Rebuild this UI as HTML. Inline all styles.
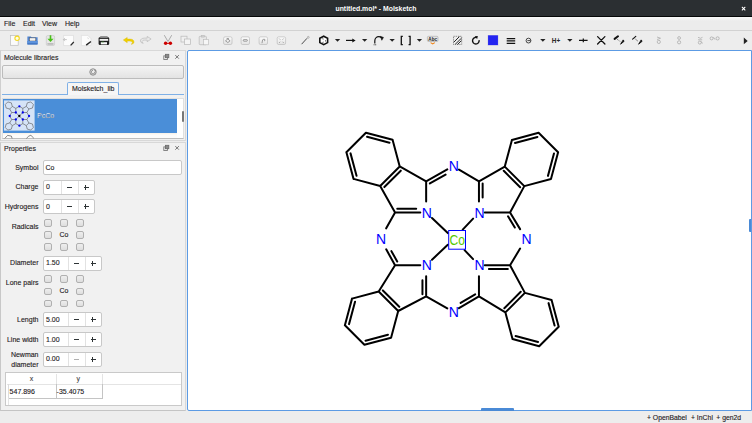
<!DOCTYPE html>
<html><head><meta charset="utf-8">
<style>
*{margin:0;padding:0;box-sizing:border-box}
html,body{width:752px;height:423px;overflow:hidden;background:#ededed;font-family:"Liberation Sans",sans-serif;color:#2e3436}
.a{position:absolute}
#title{left:0;top:0;width:752px;height:17px;background:#2b2f32;border-bottom:1px solid #060808}
#title .t{left:0;width:752px;top:3.8px;text-align:center;color:#fff;font-weight:bold;font-size:6.85px;line-height:10px}
#menu{left:0;top:17px;width:752px;height:14px;background:linear-gradient(#f9f9f9,#ececec 30%);border-bottom:1px solid #d2d2d2}
#menu span{position:absolute;top:2px;font-size:7px;line-height:10px;color:#1e2022;-webkit-text-stroke:0.12px #1e2022}
#tool{left:0;top:31px;width:752px;height:19px;background:#ededed}
.txt{font-size:7px;line-height:10px;color:#1e2022;white-space:nowrap;-webkit-text-stroke:0.12px #1e2022}
.frame{border:1px solid #d0d0d0;background:#efefef}
.spin{background:#fff;border:1px solid #c8c8c8;border-radius:2px}
.cb{width:7.6px;height:7.6px;border:1px solid #b0b0b0;border-radius:2px;background:linear-gradient(#eeeeee,#dedede)}
</style></head><body>
<div id="title" class="a"><div class="a t">untitled.mol* - Molsketch</div>
<svg class="a" style="left:739px;top:4px" width="9" height="9" viewBox="0 0 9 9"><path d="M2.9 2.9L6.3 6.3M6.3 2.9L2.9 6.3" stroke="#000" stroke-width="2.2" opacity="0.45"/><path d="M2.9 2.9L6.3 6.3M6.3 2.9L2.9 6.3" stroke="#fff" stroke-width="1.2"/></svg></div>
<div id="menu" class="a"><span style="left:4px">File</span><span style="left:23px">Edit</span><span style="left:42px">View</span><span style="left:65px">Help</span></div>
<div id="tool" class="a"></div>
<!--TB--><svg class="a" style="left:0;top:0" width="752" height="50" viewBox="0 0 752 50">
<defs>
<linearGradient id="zg" x1="0" y1="0" x2="0" y2="1"><stop offset="0" stop-color="#fdfdfd"/><stop offset="1" stop-color="#e2e2e2"/></linearGradient>
</defs>
<!-- new -->
<rect x="10.4" y="35.5" width="7.8" height="9.8" fill="#fbfbfb" stroke="#bcbcbc" stroke-width="0.7"/>
<circle cx="17.1" cy="38.3" r="2.2" fill="#fffde8" stroke="#f4d820" stroke-width="1.1"/>
<!-- open -->
<path d="M27.4 36.4h3.4l0.9 0.9h5.9v6.4h-10.2z" fill="#4f83cf"/>
<rect x="29.4" y="37.9" width="6.4" height="3.1" fill="#f4f4f4" stroke="#3a3a3a" stroke-width="0.45"/>
<path d="M27 40.9h10.9l-0.5 3.5h-9.9z" fill="#5c92dc"/>
<rect x="27.3" y="43.5" width="10.3" height="0.9" fill="#2f61b0"/>
<!-- save -->
<rect x="46.3" y="35.6" width="8.3" height="9.9" rx="1.3" fill="#e6e6e6" stroke="#c2c2c2" stroke-width="0.6"/>
<rect x="47.4" y="43" width="6.1" height="1.8" fill="#bdbdbd"/>
<path d="M49.7 35.2h1.6v3.6h2.3l-3.1 3.3l-3.1-3.3h2.3z" fill="#48c018"/>
<!-- import page -->
<path d="M63.6 35.4h9.9v7.6l-2.6 2.6h-7.3z" fill="#fcfcfc" stroke="#d6d6d6" stroke-width="0.6"/>
<path d="M63.6 39.6h3.2M64.8 38.1l-1.4 1.5l1.4 1.5" stroke="#b8b8b8" stroke-width="0.8" fill="none"/>
<path d="M70.6 45.4l3.2-3.4" stroke="#2a2a2a" stroke-width="1.3"/>
<!-- export page w pen -->
<path d="M81.4 35.4h6.4l3.2 3.3v6.9h-9.6z" fill="#fcfcfc" stroke="#dadada" stroke-width="0.6"/>
<path d="M87.6 37.5l1 1.6" stroke="#ccc" stroke-width="0.7"/>
<path d="M86.2 45.1l4.7-3.6" stroke="#262626" stroke-width="1.5"/>
<!-- print -->
<rect x="98.6" y="37.2" width="10.6" height="7.9" rx="1.4" fill="#1f1f1f"/>
<rect x="100.2" y="36.1" width="7.4" height="1.8" fill="#8a8a8a"/>
<rect x="99.6" y="38.9" width="8.6" height="1.9" fill="#f2f2f2"/>
<rect x="100.8" y="42.2" width="6.2" height="2.2" fill="#fafafa"/>
<rect x="101.6" y="41.7" width="2.2" height="0.6" fill="#55b040"/>
<!-- undo -->
<path d="M127.2 37.4l-3.9 2.6l3.9 2.7v-1.6h2.6c1.6 0 2.6 0.9 2.6 1.6c0 0.7-0.5 1.2-1.3 1.5c2.2-0.2 2.9-1.3 2.9-2.3c0-1.6-1.6-2.8-4.1-2.8h-2.7z" fill="#f0d000" stroke="#d8b800" stroke-width="0.4"/>
<!-- redo (disabled) -->
<path d="M147.2 36.4l3.9 2.6l-3.9 2.7v-1.6h-2.6c-1.6 0-2.6 0.9-2.6 1.6c0 0.7 0.5 1.2 1.3 1.5c-2.2-0.2-2.9-1.3-2.9-2.3c0-1.6 1.6-2.8 4.1-2.8h2.7z" fill="#e8e8e8" stroke="#b4b4b4" stroke-width="0.6"/>
<!-- cut -->
<path d="M164.3 35.2l3.6 6.2M171.7 35.2l-3.6 6.2" stroke="#aaa" stroke-width="1" fill="none"/>
<circle cx="165.6" cy="43.3" r="1.7" fill="#cc0000"/><circle cx="170.4" cy="43.3" r="1.7" fill="#cc0000"/>
<path d="M165.6 43.3h4.8" stroke="#cc0000" stroke-width="1"/>
<!-- copy (disabled) -->
<rect x="181" y="36.2" width="6" height="5.8" fill="#f0f0f0" stroke="#b8b8b8" stroke-width="0.7"/>
<rect x="184.5" y="39" width="6" height="5.6" fill="#f4f4f4" stroke="#b8b8b8" stroke-width="0.7"/>
<!-- paste (disabled) -->
<rect x="199.2" y="36.3" width="7.2" height="8.4" rx="0.8" fill="#e8e8e8" stroke="#b8b8b8" stroke-width="0.7"/>
<rect x="201.3" y="35.3" width="3" height="1.8" fill="#d0d0d0" stroke="#b8b8b8" stroke-width="0.5"/>
<rect x="203.6" y="39.4" width="5" height="5.4" fill="#f6f6f6" stroke="#b8b8b8" stroke-width="0.6"/>
<!-- zoom buttons -->
<g stroke="#b4b4b4" stroke-width="0.6" fill="url(#zg)">
<rect x="223.6" y="36.9" width="8.4" height="7.6" rx="1.4"/>
<rect x="241.1" y="36.9" width="8.4" height="7.6" rx="1.4"/>
<rect x="259.1" y="36.9" width="8.4" height="7.6" rx="1.4"/>
<rect x="277.2" y="36.9" width="8.4" height="7.6" rx="1.4"/>
</g>
<g stroke="#666" stroke-width="0.6" fill="none">
<path d="M225.5 40.8l2.3-1.8l2.3 1.8l-2.3 1.8z M226.6 38.6h2.4"/>
<rect x="243.3" y="39.6" width="4" height="1.6" rx="0.5"/>
<path d="M262 43.2l0.6-3.4l1.6-0.8l1 1.2l-1.2 0.8"/>
<path d="M279.2 38.6l1 1M283.6 38.6l-1 1M279.2 42.8l1-1M283.6 42.8l-1-1"/>
</g>
<!-- pen -->
<path d="M301.6 44.2l5.4-5.9" stroke="#4a4a4a" stroke-width="1"/>
<circle cx="308.3" cy="37.3" r="0.9" fill="none" stroke="#999" stroke-width="0.7"/>
<!-- hexagon -->
<polygon points="323.7,36.2 327.6,38.3 327.6,42.6 323.7,44.7 319.8,42.6 319.8,38.3" fill="#fff" stroke="#111" stroke-width="1.6"/>
<path d="M322.2 38.7l1.5 0.4M325.5 40.2v1.3M322.3 42.5l1.4-0.4" stroke="#222" stroke-width="0.7"/>
<!-- dropdowns -->
<g fill="#222">
<path d="M334.9 39h5.3l-2.65 2.8z"/>
<path d="M362 39h5.3l-2.65 2.8z"/>
<path d="M389.5 39h5.3l-2.65 2.8z"/>
<path d="M416.8 39h5.3l-2.65 2.8z"/>
<path d="M540.2 39h5.3l-2.65 2.8z"/>
<path d="M567.2 39h5.3l-2.65 2.8z"/>
<path d="M743.8 37.6l3.9 3.3l-3.9 3.3z"/>
</g>
<!-- arrow -->
<path d="M346 40.4h7" stroke="#111" stroke-width="1.2"/>
<path d="M352.3 38.4l3.3 2l-3.3 2z" fill="#111"/>
<!-- curved arrow -->
<path d="M374.8 43.6v-2.6c0-2.5 1.8-4.3 4-4.3c1.1 0 1.9 0.3 2.5 0.9" stroke="#111" stroke-width="1.2" fill="none"/>
<path d="M380.4 36.3l3.1 1.1l-1.7 2.9z" fill="#111" stroke="#111" stroke-width="0.5" stroke-linejoin="round"/>
<circle cx="374.1" cy="44.8" r="0.55" fill="#222"/><circle cx="375.7" cy="44.8" r="0.55" fill="#222"/>
<!-- brackets -->
<path d="M402.8 36.4h-1.5v8.3h1.5M408.6 36.4h1.5v8.3h-1.5" stroke="#111" stroke-width="1.3" fill="none"/>
<!-- Abc -->
<rect x="427.4" y="36.3" width="10.6" height="5.2" rx="1" fill="#e4e4e4" stroke="#9a9a9a" stroke-width="0.5"/>
<text x="432.7" y="40.7" font-size="4.6" font-weight="bold" text-anchor="middle" fill="#222" font-family="Liberation Sans">Abc</text>
<path d="M430.6 42.6l2.1 1.3l2.1-1.3" stroke="#f08010" stroke-width="1.1" fill="none"/>
<!-- hatch -->
<rect x="453.5" y="36.3" width="8.2" height="8.2" fill="none" stroke="#555" stroke-width="0.7" stroke-dasharray="1.2 1"/>
<path d="M453.8 42.2l5.6-5.6M455.4 44.2l6-6M457.6 44.4l3.8-3.8" stroke="#111" stroke-width="0.9"/>
<!-- rotate -->
<path d="M476.9 37.6a3.3 3.3 0 1 0 2.2 2.6" stroke="#111" stroke-width="1.4" fill="none"/>
<path d="M474.6 36.2l3.2-0.2l-0.6 3z" fill="#111"/>
<!-- color -->
<rect x="487.8" y="35" width="10.4" height="10.4" fill="#2424f0" stroke="#fffbe0" stroke-width="0.5"/>
<!-- line width -->
<path d="M506.7 38.6h8.5M506.7 40.9h8.5M506.7 43.3h8.5" stroke="#111" stroke-width="1.2"/>
<!-- charge -->
<circle cx="528.5" cy="40.6" r="2.4" fill="none" stroke="#333" stroke-width="0.9"/>
<path d="M527.4 40.6h3.2" stroke="#333" stroke-width="0.9"/>
<!-- H+ -->
<text x="551.8" y="43" font-size="6.4" font-weight="bold" fill="#2a2a2a" font-family="Liberation Sans">H+</text>
<!-- -+- -->
<path d="M579 40.4h8.6M583.3 38.6v3.6" stroke="#111" stroke-width="1.2"/>
<!-- X -->
<path d="M597.6 36.6l7.3 7.4M604.9 36.6l-7.3 7.4" stroke="#111" stroke-width="1.3" stroke-linecap="round"/>
<!-- wedges -->
<path d="M614.6 38.9l3.4-2.6" stroke="#111" stroke-width="2" stroke-linecap="round"/>
<path d="M620.6 44.2l3.5-2.9l-0.9-1.4z" fill="#111" stroke="#111" stroke-width="0.9" stroke-linejoin="round"/>
<path d="M617.3 39.4l3 2.2" stroke="#222" stroke-width="0.7" stroke-dasharray="0.9 0.7"/>
<path d="M632.6 39.2l3.2-2.9" stroke="#111" stroke-width="1.1" stroke-linecap="round"/>
<path d="M638.6 44.2l3.5-2.9l-0.9-1.4z" fill="#111" stroke="#111" stroke-width="0.9" stroke-linejoin="round"/>
<path d="M634.8 38.6l3.4 2.8" stroke="#222" stroke-width="0.7" stroke-dasharray="0.9 0.7"/>
<!-- gray small icons -->
<g stroke="#999" stroke-width="0.6" fill="none">
<path d="M657 37l3.5 1.2M657 39.5l3.5-1.2"/><circle cx="658.8" cy="41.9" r="1.6"/>
<circle cx="679.1" cy="38" r="1.4"/><circle cx="679.1" cy="42.3" r="1.6"/>
<path d="M698 37.3l2.5 1l2-1M698 39.8h4.2"/><circle cx="699.8" cy="42.6" r="1.5"/><path d="M701.4 41.5l1 2"/>
<circle cx="711.6" cy="38.4" r="1.5"/><circle cx="717.6" cy="38.4" r="1.6"/><path d="M713.5 37.2l1.5 2.4"/>
</g>
</svg>
<!--/TB-->

<!-- Left docks -->
<div class="a" style="left:0px;top:50px;width:186px;height:91px;border:1px solid #d8d8d8;border-left-color:#cfcfcf;background:#f1f1f1"></div>
<div class="a txt" style="left:4px;top:52.7px">Molecule libraries</div>
<svg class="a" style="left:162px;top:53px" width="20" height="9" viewBox="0 0 20 9">
 <rect x="1.8" y="2.9" width="3.6" height="3.6" fill="none" stroke="#7a7a7a" stroke-width="0.9"/>
 <rect x="3.4" y="1.3" width="3.4" height="3.4" fill="#8a8a8a" stroke="#6a6a6a" stroke-width="0.8"/>
 <path d="M13.3 2.1L16.9 5.7M16.9 2.1L13.3 5.7" stroke="#6a6a6a" stroke-width="0.9"/>
</svg>
<div class="a" style="left:2px;top:65px;width:182px;height:14px;border:1px solid #bcbcbc;border-radius:2px;background:linear-gradient(#f4f4f4,#e3e3e3)"></div>
<svg class="a" style="left:88px;top:67px" width="10" height="10" viewBox="0 0 10 10">
 <circle cx="5" cy="5" r="3.2" fill="none" stroke="#8a8a8a" stroke-width="1"/>
 <path d="M5 3.3A1.8 1.8 0 1 0 6.8 5" fill="none" stroke="#8a8a8a" stroke-width="0.9"/>
 <path d="M6 2.6L8.4 3.2L7.2 5.2Z" fill="#8a8a8a"/>
</svg>
<div class="a" style="left:2px;top:94px;width:182px;height:1px;background:#7fb0e6"></div>
<div class="a" style="left:67px;top:82px;width:52px;height:13px;border:1px solid #7fb0e6;border-bottom:none;border-radius:2px 2px 0 0;background:#f6f6f6"></div>
<div class="a txt" style="left:72px;top:83.5px">Molsketch_lib</div>
<div class="a" style="left:2px;top:98px;width:182px;height:41px;background:#fff;border:1px solid #e0e0e0;border-bottom-color:#bdbdbd"></div>
<div class="a" style="left:3px;top:99px;width:174px;height:34px;background:#4a8ed8"></div>
<div class="a" style="left:3px;top:133px;width:174px;height:5px;background:linear-gradient(#f7f0e6,#fdfcfb 40%)"></div>
<svg class="a" style="left:0;top:130px" width="40" height="10" viewBox="0 0 40 10"><path d="M4.8 8.4L7.6 5.4L11.4 6.1L12.1 8.4M26.4 8.4L28.8 6.1L30.9 5.3L33.8 8.2" stroke="#555" stroke-width="0.7" fill="none"/></svg>
<div class="a" style="left:181.5px;top:111px;width:2px;height:11px;background:#777;border-radius:1px"></div>
<!--THUMB--><svg class="a" style="left:0;top:0" width="40" height="135" viewBox="0 0 40 135">
<rect x="4" y="100.4" width="30.6" height="30.2" fill="#d6e4f7"/>
<path d="M15.80 112.50L15.80 108.38M15.80 112.50L11.68 112.50M15.80 108.38L19.30 106.35M11.68 112.50L9.65 116.00M15.80 108.38L12.30 106.41M11.68 112.50L9.71 109.00M12.30 106.41L9.71 109.00M12.30 106.41L11.35 102.88M11.35 102.88L7.82 101.93M7.82 101.93L5.23 104.52M5.23 104.52L6.18 108.05M6.18 108.05L9.71 109.00M15.80 112.50L19.30 116.00M22.80 112.50L26.92 112.50M22.80 112.50L22.80 108.38M26.92 112.50L28.95 116.00M22.80 108.38L19.30 106.35M26.92 112.50L28.89 109.00M22.80 108.38L26.30 106.41M28.89 109.00L26.30 106.41M28.89 109.00L32.42 108.05M32.42 108.05L33.37 104.52M33.37 104.52L30.78 101.93M30.78 101.93L27.25 102.88M27.25 102.88L26.30 106.41M22.80 112.50L19.30 116.00M22.80 119.50L22.80 123.62M22.80 119.50L26.92 119.50M22.80 123.62L19.30 125.65M26.92 119.50L28.95 116.00M22.80 123.62L26.30 125.59M26.92 119.50L28.89 123.00M26.30 125.59L28.89 123.00M26.30 125.59L27.25 129.12M27.25 129.12L30.78 130.07M30.78 130.07L33.37 127.48M33.37 127.48L32.42 123.95M32.42 123.95L28.89 123.00M22.80 119.50L19.30 116.00M15.80 119.50L11.68 119.50M15.80 119.50L15.80 123.62M11.68 119.50L9.65 116.00M15.80 123.62L19.30 125.65M11.68 119.50L9.71 123.00M15.80 123.62L12.30 125.59M9.71 123.00L12.30 125.59M9.71 123.00L6.18 123.95M6.18 123.95L5.23 127.48M5.23 127.48L7.82 130.07M7.82 130.07L11.35 129.12M11.35 129.12L12.30 125.59M15.80 119.50L19.30 116.00" stroke="#555" stroke-width="0.6" fill="none"/>
<circle cx="15.80" cy="112.50" r="1.15" fill="#0000f0"/>
<circle cx="19.38" cy="106.35" r="1.15" fill="#0000f0"/>
<circle cx="9.73" cy="116.00" r="1.15" fill="#0000f0"/>
<circle cx="22.80" cy="112.50" r="1.15" fill="#0000f0"/>
<circle cx="29.03" cy="116.00" r="1.15" fill="#0000f0"/>
<circle cx="22.80" cy="119.50" r="1.15" fill="#0000f0"/>
<circle cx="19.38" cy="125.65" r="1.15" fill="#0000f0"/>
<circle cx="15.80" cy="119.50" r="1.15" fill="#0000f0"/>
<circle cx="19.30" cy="116.00" r="1.15" fill="#000"/>
</svg><!--/THUMB-->
<div class="a txt" style="left:37px;top:111px;color:#fff">PcCo</div>

<div class="a" style="left:0px;top:142px;width:186px;height:269px;border:1px solid #d8d8d8;border-left-color:#c8c8c8;border-bottom-color:#c4c4c4;background:#f1f1f1"></div>
<div class="a txt" style="left:4px;top:144px">Properties</div>
<svg class="a" style="left:162px;top:144px" width="20" height="9" viewBox="0 0 20 9">
 <rect x="1.8" y="2.9" width="3.6" height="3.6" fill="none" stroke="#7a7a7a" stroke-width="0.9"/>
 <rect x="3.4" y="1.3" width="3.4" height="3.4" fill="#8a8a8a" stroke="#6a6a6a" stroke-width="0.8"/>
 <path d="M13.3 2.1L16.9 5.7M16.9 2.1L13.3 5.7" stroke="#6a6a6a" stroke-width="0.9"/>
</svg>
<!--PROPS-->
<div class="a txt" style="right:713.5px;top:162.5px;text-align:right">Symbol</div>
<div class="a spin" style="left:42.5px;top:159.5px;width:139.3px;height:15.7px"></div>
<div class="a txt" style="left:45.5px;top:162.5px">Co</div>
<div class="a txt" style="right:713.5px;top:182px;text-align:right">Charge</div>
<div class="a spin" style="left:42.5px;top:179.5px;width:52.0px;height:15.2px"></div>
<div class="a" style="left:60.5px;top:180.5px;width:1px;height:13.2px;background:#e2e2e2"></div>
<div class="a" style="left:77.5px;top:180.5px;width:1px;height:13.2px;background:#e2e2e2"></div>
<div class="a txt" style="left:46px;top:182.1px">0</div>
<div class="a" style="left:66.6px;top:186.6px;width:5px;height:0.9px;background:#2e3436"></div>
<div class="a" style="left:83.5px;top:186.6px;width:5px;height:0.9px;background:#2e3436"></div>
<div class="a" style="left:85.45px;top:184.5px;width:0.9px;height:5.3px;background:#2e3436"></div>
<div class="a txt" style="right:713.5px;top:201.7px;text-align:right">Hydrogens</div>
<div class="a spin" style="left:42.5px;top:199.1px;width:52.0px;height:15.2px"></div>
<div class="a" style="left:60.5px;top:200.1px;width:1px;height:13.2px;background:#e2e2e2"></div>
<div class="a" style="left:77.5px;top:200.1px;width:1px;height:13.2px;background:#e2e2e2"></div>
<div class="a txt" style="left:46px;top:201.7px">0</div>
<div class="a" style="left:66.6px;top:206.2px;width:5px;height:0.9px;background:#2e3436"></div>
<div class="a" style="left:83.5px;top:206.2px;width:5px;height:0.9px;background:#2e3436"></div>
<div class="a" style="left:85.45px;top:204.1px;width:0.9px;height:5.3px;background:#2e3436"></div>
<div class="a txt" style="right:713.5px;top:221.6px;text-align:right">Radicals</div>
<div class="a cb" style="left:44.2px;top:219.2px"></div>
<div class="a cb" style="left:60.2px;top:219.2px"></div>
<div class="a cb" style="left:76.4px;top:219.2px"></div>
<div class="a cb" style="left:44.2px;top:231.1px"></div>
<div class="a txt" style="left:59.5px;top:229.9px">Co</div>
<div class="a cb" style="left:76.4px;top:231.1px"></div>
<div class="a cb" style="left:44.2px;top:243.0px"></div>
<div class="a cb" style="left:60.2px;top:243.0px"></div>
<div class="a cb" style="left:76.4px;top:243.0px"></div>
<div class="a txt" style="right:713.5px;top:258.3px;text-align:right">Diameter</div>
<div class="a spin" style="left:42.5px;top:255.7px;width:59.0px;height:15.2px"></div>
<div class="a" style="left:67.7px;top:256.7px;width:1px;height:13.2px;background:#e2e2e2"></div>
<div class="a" style="left:84.5px;top:256.7px;width:1px;height:13.2px;background:#e2e2e2"></div>
<div class="a txt" style="left:46px;top:258.3px">1.50</div>
<div class="a" style="left:73.69999999999999px;top:262.8px;width:5px;height:0.9px;background:#2e3436"></div>
<div class="a" style="left:90.5px;top:262.8px;width:5px;height:0.9px;background:#2e3436"></div>
<div class="a" style="left:92.45px;top:260.7px;width:0.9px;height:5.3px;background:#2e3436"></div>
<div class="a txt" style="right:713.5px;top:277.9px;text-align:right">Lone pairs</div>
<div class="a cb" style="left:44.2px;top:275.3px"></div>
<div class="a cb" style="left:60.2px;top:275.3px"></div>
<div class="a cb" style="left:76.4px;top:275.3px"></div>
<div class="a cb" style="left:44.2px;top:287.5px"></div>
<div class="a txt" style="left:59.5px;top:286.3px">Co</div>
<div class="a cb" style="left:76.4px;top:287.5px"></div>
<div class="a cb" style="left:44.2px;top:299.9px"></div>
<div class="a cb" style="left:60.2px;top:299.9px"></div>
<div class="a cb" style="left:76.4px;top:299.9px"></div>
<div class="a txt" style="right:713.5px;top:314.5px;text-align:right">Length</div>
<div class="a spin" style="left:42.5px;top:312px;width:59.0px;height:15.2px"></div>
<div class="a" style="left:67.7px;top:313px;width:1px;height:13.2px;background:#e2e2e2"></div>
<div class="a" style="left:84.5px;top:313px;width:1px;height:13.2px;background:#e2e2e2"></div>
<div class="a txt" style="left:46px;top:314.6px">5.00</div>
<div class="a" style="left:73.69999999999999px;top:319.1px;width:5px;height:0.9px;background:#2e3436"></div>
<div class="a" style="left:90.5px;top:319.1px;width:5px;height:0.9px;background:#2e3436"></div>
<div class="a" style="left:92.45px;top:317px;width:0.9px;height:5.3px;background:#2e3436"></div>
<div class="a txt" style="right:713.5px;top:334.5px;text-align:right">Line width</div>
<div class="a spin" style="left:42.5px;top:332px;width:59.0px;height:15.2px"></div>
<div class="a" style="left:67.7px;top:333px;width:1px;height:13.2px;background:#e2e2e2"></div>
<div class="a" style="left:84.5px;top:333px;width:1px;height:13.2px;background:#e2e2e2"></div>
<div class="a txt" style="left:46px;top:334.6px">1.00</div>
<div class="a" style="left:73.69999999999999px;top:339.1px;width:5px;height:0.9px;background:#2e3436"></div>
<div class="a" style="left:90.5px;top:339.1px;width:5px;height:0.9px;background:#2e3436"></div>
<div class="a" style="left:92.45px;top:337px;width:0.9px;height:5.3px;background:#2e3436"></div>
<div class="a txt" style="right:713.5px;top:350.3px;text-align:right">Newman</div>
<div class="a txt" style="right:713.5px;top:359.5px;text-align:right">diameter</div>
<div class="a spin" style="left:42.5px;top:351.6px;width:59.0px;height:15.2px"></div>
<div class="a" style="left:67.7px;top:352.6px;width:1px;height:13.2px;background:#e2e2e2"></div>
<div class="a" style="left:84.5px;top:352.6px;width:1px;height:13.2px;background:#e2e2e2"></div>
<div class="a txt" style="left:46px;top:354.20000000000005px">0.00</div>
<div class="a" style="left:73.69999999999999px;top:358.70000000000005px;width:5px;height:0.9px;background:#b0b0b0"></div>
<div class="a" style="left:90.5px;top:358.70000000000005px;width:5px;height:0.9px;background:#2e3436"></div>
<div class="a" style="left:92.45px;top:356.6px;width:0.9px;height:5.3px;background:#2e3436"></div>
<div class="a" style="left:5px;top:372px;width:177px;height:34px;background:#fff;border:1px solid #c9c9c9"></div>
<div class="a" style="left:6.5px;top:384px;width:174.5px;height:1px;background:#e4e4e4"></div>
<div class="a" style="left:55.5px;top:373.5px;width:1px;height:11px;background:#e4e4e4"></div>
<div class="a" style="left:102.3px;top:373.5px;width:1px;height:11px;background:#e4e4e4"></div>
<div class="a" style="left:8px;top:384px;width:95.3px;height:14.6px;border:1px solid #c4c4c4;border-top:none;border-left-color:#dcdcdc"></div>
<div class="a" style="left:55.5px;top:384px;width:1px;height:14.6px;background:#c4c4c4"></div>
<div class="a" style="left:8px;top:398px;width:1px;height:7px;background:#e4e4e4"></div>
<div class="a txt" style="left:29.8px;top:373.5px;color:#555">x</div>
<div class="a txt" style="left:76.5px;top:373.5px;color:#555">y</div>
<div class="a txt" style="left:9.6px;top:387px">547.896</div>
<div class="a txt" style="left:56.6px;top:387px">-35.4075</div>

<!-- Canvas -->
<div class="a" style="left:187px;top:50px;width:565px;height:361px;background:#fff;border:1px solid #5c9be4;border-radius:2px 0 0 2px"></div>
<div class="a" style="left:481px;top:408px;width:32.5px;height:2.5px;background:#4a8ad6;border-radius:1px 1px 0 0"></div>
<div class="a" style="left:748.8px;top:219px;width:2.5px;height:13px;background:#4a8ad6;border-radius:1px 0 0 1px"></div>

<!--MOL--><svg class="a" style="left:0;top:0" width="752" height="423" viewBox="0 0 752 423">
<path d="M426.15 201.55L426.15 181.35M420.30 212.45L395.05 212.45M416.20 208.75L397.25 208.75M426.15 181.35L447.30 169.37M429.89 183.48L445.56 174.61M395.05 212.45L386.20 228.34M426.15 181.35L399.71 166.49M395.05 212.45L380.19 186.01M399.71 166.49L380.19 186.01M400.77 170.67L384.37 187.07M399.71 166.49L392.57 139.83M392.57 139.83L365.91 132.69M389.48 142.84L367.07 136.83M365.91 132.69L346.39 152.21M346.39 152.21L353.53 178.87M350.53 153.37L356.54 175.78M353.53 178.87L380.19 186.01M432.00 218.03L447.80 233.09M484.80 212.45L510.05 212.45M478.95 201.55L478.95 181.35M482.65 197.45L482.65 183.55M510.05 212.45L520.10 229.14M508.02 216.24L514.82 227.53M478.95 181.35L459.00 169.52M510.05 212.45L524.31 186.11M478.95 181.35L504.79 166.59M524.31 186.11L504.79 166.59M520.13 187.17L503.73 170.77M524.31 186.11L550.97 178.97M550.97 178.97L558.11 152.31M547.96 175.88L553.97 153.47M558.11 152.31L538.59 132.79M538.59 132.79L511.93 139.93M537.43 136.93L515.02 142.94M511.93 139.93L504.79 166.59M473.10 218.63L462.71 229.60M478.95 276.15L478.95 296.35M484.80 265.25L510.05 265.25M488.90 268.95L507.85 268.95M478.95 296.35L459.00 308.18M475.17 294.29L460.64 302.91M510.05 265.25L520.10 248.56M478.95 296.35L505.39 312.41M510.05 265.25L524.91 292.89M505.39 312.41L524.91 292.89M504.33 308.23L520.73 291.83M505.39 312.41L512.53 339.07M512.53 339.07L539.19 346.21M515.62 336.06L538.03 342.07M539.19 346.21L558.71 326.69M558.71 326.69L551.57 300.03M554.57 325.53L548.56 303.12M551.57 300.03L524.91 292.89M473.10 259.10L464.55 250.10M420.30 265.25L395.05 265.25M426.15 276.15L426.15 296.35M422.45 280.25L422.45 294.15M395.05 265.25L386.20 249.36M397.21 261.53L391.43 251.14M426.15 296.35L447.30 308.33M395.05 265.25L378.69 291.49M426.15 296.35L398.21 311.01M378.69 291.49L398.21 311.01M382.87 290.43L399.27 306.83M378.69 291.49L352.03 298.63M352.03 298.63L344.89 325.29M355.04 301.72L349.03 324.13M344.89 325.29L364.41 344.81M364.41 344.81L391.07 337.67M365.57 340.67L387.98 334.66M391.07 337.67L398.21 311.01M432.00 259.70L447.80 244.69" stroke="#000" stroke-width="2.0" stroke-linecap="round" fill="none"/>
<text x="426.75" y="217.55" font-size="14" fill="#0000ff" text-anchor="middle">N</text>
<text x="453.75" y="171.15" font-size="14" fill="#0000ff" text-anchor="middle">N</text>
<text x="380.95" y="243.95" font-size="14" fill="#0000ff" text-anchor="middle">N</text>
<text x="479.55" y="217.55" font-size="14" fill="#0000ff" text-anchor="middle">N</text>
<text x="526.55" y="243.95" font-size="14" fill="#0000ff" text-anchor="middle">N</text>
<text x="479.55" y="270.35" font-size="14" fill="#0000ff" text-anchor="middle">N</text>
<text x="453.75" y="316.75" font-size="14" fill="#0000ff" text-anchor="middle">N</text>
<text x="426.75" y="270.35" font-size="14" fill="#0000ff" text-anchor="middle">N</text>
<rect x="448.70" y="230.50" width="16.80" height="18.70" fill="none" stroke="#0000ff" stroke-width="1"/>
<text x="449.60" y="244.80" font-size="14" fill="#55c800" textLength="15.4" lengthAdjust="spacingAndGlyphs">Co</text>
</svg><!--/MOL-->
<!-- status -->
<div class="a txt" style="left:647px;top:412.7px;font-size:6.8px">+ OpenBabel</div>
<div class="a txt" style="left:691px;top:412.7px;font-size:6.8px">+ InChI</div>
<div class="a txt" style="left:716.3px;top:412.7px;font-size:6.8px">+ gen2d</div>
</body></html>
